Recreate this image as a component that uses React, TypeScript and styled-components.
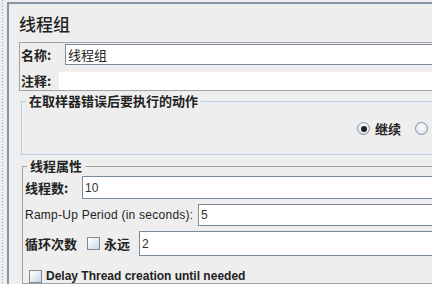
import styled, { createGlobalStyle } from "styled-components";

const GlobalStyle = createGlobalStyle`
  html, body {
    margin: 0;
    padding: 0;
    background: #eeeeee;
    overflow: hidden;
  }
  body {
    width: 432px;
    height: 284px;
  }
`;

const cjk = `"Noto Sans CJK SC", "Noto Sans", sans-serif`;
const latin = `"Liberation Sans", Arial, "Noto Sans CJK SC", sans-serif`;

const Page = styled.div`
  display: flex;
  width: 900px;
  height: 284px;
  padding-top: 2px;
  box-sizing: border-box;
  background: #eeeeee;
`;

const DotStrip = styled.div`
  width: 7px;
  flex-shrink: 0;
  margin-top: -2px;
  background-image: repeating-linear-gradient(
    to bottom,
    #8ea2b6 0px,
    #8ea2b6 1px,
    transparent 1px,
    transparent 3px
  );
  background-size: 1px 100%;
  background-position: 2px 0;
  background-repeat: no-repeat;
`;

const Main = styled.div`
  flex: 1;
  border-left: 2px solid #8796a6;
  border-top: 2px solid #8796a6;
  padding: 0 0 0 10px;
  display: flex;
  flex-direction: column;
`;

const Title = styled.div`
  font-family: ${cjk};
  font-size: 17px;
  font-weight: 500;
  line-height: 24px;
  color: #222;
  margin-top: 8px;
  margin-bottom: 6px;
`;

const NameBox = styled.div`
  border: 1px solid #a3a3a3;
  padding: 1px 0 0 1px;
  display: flex;
  flex-direction: column;
`;

const BoxRow = styled.div<{ $gap?: number }>`
  display: flex;
  align-items: center;
  margin-top: ${(p) => p.$gap ?? 0}px;
`;

const Label = styled.span<{ $width?: number }>`
  font-family: ${cjk};
  font-size: 13px;
  font-weight: 700;
  color: #222;
  white-space: nowrap;
  width: ${(p) => (p.$width ? `${p.$width}px` : "auto")};
  flex-shrink: 0;
`;

const LatinLabel = styled.span<{ $width: number }>`
  font-family: ${latin};
  font-size: 12px;
  letter-spacing: 0.25px;
  color: #222;
  white-space: nowrap;
  width: ${(p) => p.$width}px;
  flex-shrink: 0;
`;

const Field = styled.div<{ $height: number }>`
  flex: 1;
  height: ${(p) => p.$height}px;
  box-sizing: border-box;
  background: #ffffff;
  border: 1px solid #7a8a99;
  border-right: none;
  display: flex;
  align-items: center;
  padding-left: 2px;
  font-family: ${latin};
  font-size: 12px;
  color: #333;
`;

const CjkValue = styled.span`
  font-family: ${cjk};
  font-size: 13px;
  color: #222;
`;

const Comment = styled.div`
  flex: 1;
  height: 18px;
  background: #ffffff;
`;

const Group = styled.fieldset<{ $color: string; $indent: number; $top: number }>`
  margin: ${(p) => p.$top}px 0 0 ${(p) => p.$indent}px;
  padding: 0 0 0 2px;
  border: 1px solid ${(p) => p.$color};
  border-right: none;
  min-width: 0;

  legend {
    font-family: ${cjk};
    font-size: 13px;
    font-weight: 700;
    line-height: 14px;
    color: #222;
    padding: 0 3px;
    margin-left: 2px;
  }
`;

const RadioRow = styled.div`
  display: flex;
  align-items: center;
  height: 17px;
  margin: 12px 0 17px 333px;
`;

const RadioItem = styled.label`
  display: flex;
  align-items: center;
  gap: 5px;
  margin-right: 14px;
  font-family: ${cjk};
  font-size: 13px;
  font-weight: 700;
  color: #222;
  white-space: nowrap;
`;

const RadioDot = styled.span<{ $on?: boolean }>`
  width: 13px;
  height: 13px;
  box-sizing: border-box;
  border-radius: 50%;
  border: 1px solid #8393a3;
  background: radial-gradient(circle at 50% 35%, #ffffff 0%, #dde6ef 70%, #c3d0dc 100%);
  display: flex;
  align-items: center;
  justify-content: center;
  flex-shrink: 0;

  &::after {
    content: "";
    width: 6px;
    height: 6px;
    border-radius: 50%;
    background: #222;
    display: ${(p) => (p.$on ? "block" : "none")};
  }
`;

const Check = styled.span<{ $left?: number; $right?: number }>`
  width: 13px;
  height: 13px;
  box-sizing: border-box;
  border: 1px solid #7a8a99;
  background: linear-gradient(135deg, #ffffff 0%, #dfe8f1 60%, #c8d5e2 100%);
  margin-left: ${(p) => p.$left ?? 0}px;
  margin-right: ${(p) => p.$right ?? 0}px;
  flex-shrink: 0;
`;

const PropRow = styled.div<{ $gap: number }>`
  display: flex;
  align-items: center;
  margin-top: ${(p) => p.$gap}px;
`;

const DelayText = styled.span`
  font-family: ${latin};
  font-size: 12px;
  font-weight: 700;
  color: #222;
  white-space: nowrap;
`;

const App = () => {
  return (
    <>
      <GlobalStyle />
      <Page>
        <DotStrip />
        <Main>
          <Title>线程组</Title>
          <NameBox>
            <BoxRow>
              <Label $width={44}>名称:</Label>
              <Field $height={21}>
                <CjkValue>线程组</CjkValue>
              </Field>
            </BoxRow>
            <BoxRow $gap={6}>
              <Label $width={38}>注释:</Label>
              <Comment />
            </BoxRow>
          </NameBox>

          <Group $color="#b8cfe5" $indent={2} $top={3}>
            <legend>在取样器错误后要执行的动作</legend>
            <RadioRow>
              <RadioItem>
                <RadioDot $on />
                继续
              </RadioItem>
              <RadioItem>
                <RadioDot />
                启动下一进程循环
              </RadioItem>
            </RadioRow>
          </Group>

          <Group $color="#a3a3a3" $indent={3} $top={4}>
            <legend>线程属性</legend>
            <PropRow $gap={3}>
              <Label $width={57}>线程数:</Label>
              <Field $height={23}>10</Field>
            </PropRow>
            <PropRow $gap={5}>
              <LatinLabel $width={173}>Ramp-Up Period (in seconds):</LatinLabel>
              <Field $height={22}>5</Field>
            </PropRow>
            <PropRow $gap={5}>
              <Label $width={62}>循环次数</Label>
              <Check $right={4} />
              <Label $width={35}>永远</Label>
              <Field $height={25}>2</Field>
            </PropRow>
            <PropRow $gap={13}>
              <Check $left={4} $right={4} />
              <DelayText>Delay Thread creation until needed</DelayText>
            </PropRow>
          </Group>
        </Main>
      </Page>
    </>
  );
};

export default App;
